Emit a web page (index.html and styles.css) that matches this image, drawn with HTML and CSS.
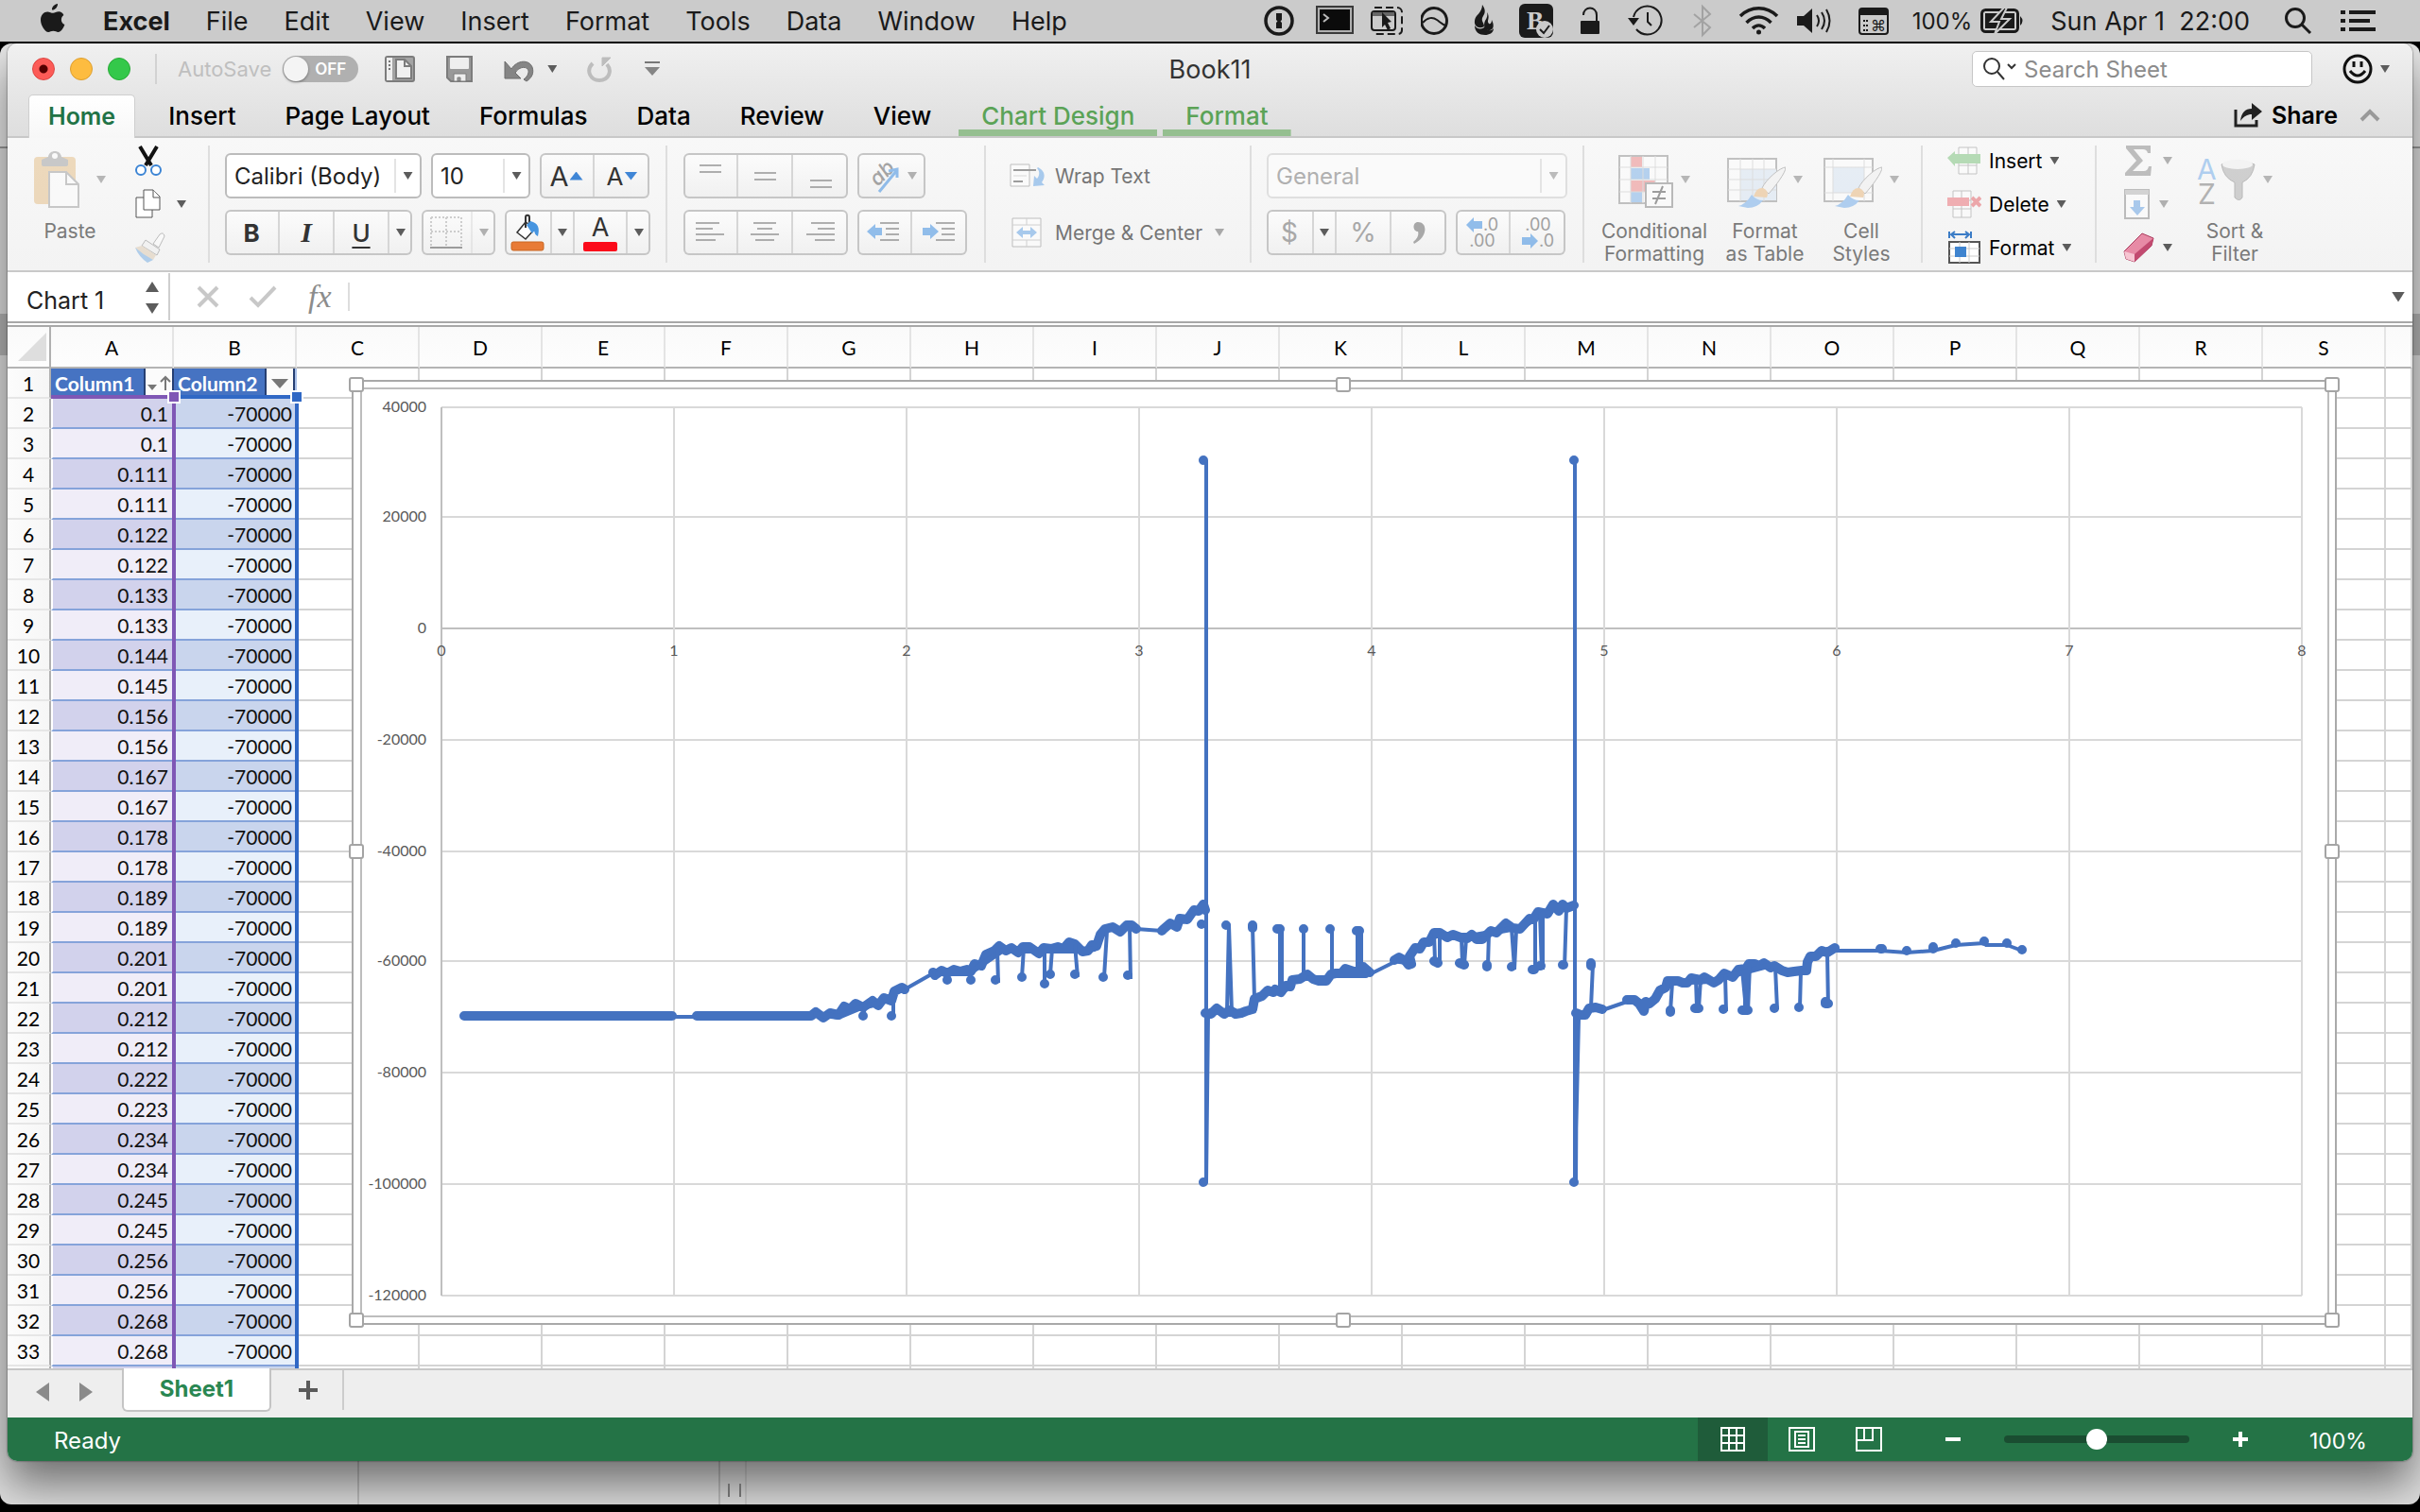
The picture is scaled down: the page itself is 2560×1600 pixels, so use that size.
FILE: index.html
```
<!DOCTYPE html>
<html lang="en">
<head>
<meta charset="utf-8">
<title>Book11</title>
<link rel="stylesheet" href="styles.css">
</head>
<body>
<header class="menubar">
  <nav class="menus" aria-label="Menu bar">
    <svg class="apple" width="28" height="34" viewBox="0 0 28 34"><path d="M19 0c.3 3-2.600 6.800-6 6.600C12.600 3.600 15.600.4 19 0zM25.400 12c-3.600 2.400-3.400 8.200 1 10-1.400 4-4 8-6.800 8-2 0-2.800-1.200-5.200-1.200S11 30 9.200 30C5.400 30 1 22.600 1 17 1 11.400 4.600 8.400 8.200 8.400c2.400 0 4 1.400 6 1.400 1.800 0 3.200-1.600 6.200-1.600 2 0 3.800 1.200 5 3.800z"/></svg>
    <a href="#" class="app">Excel</a><a href="#">File</a><a href="#">Edit</a><a href="#">View</a><a href="#">Insert</a><a href="#">Format</a><a href="#">Tools</a><a href="#">Data</a><a href="#">Window</a><a href="#">Help</a>
  </nav>
  <div class="tray">
    <svg width="37" height="36" viewBox="0 0 37 36"><circle cx="16" cy="18" r="14" fill="none" stroke="#1a1a1a" stroke-width="3.500"/><path d="M13 10h6v7l-1.500 1.500L19 20v6h-6v-6l1.500-1.500L13 17z"/></svg>
    <svg width="40" height="36" viewBox="0 0 40 36"><rect x="1" y="3" width="38" height="28" fill="#b0b0b0" stroke="#3a3a3a" stroke-width="2"/><rect x="4" y="6" width="32" height="22" fill="#0b0b0b"/><path d="M8 11l5 4-5 4" fill="none" stroke="#bbb" stroke-width="2"/></svg>
    <svg width="35" height="36" viewBox="0 0 35 36" fill="none" stroke="#1a1a1a" stroke-width="2"><rect x="1" y="8" width="25" height="20" rx="3"/><path d="M2 11h23" stroke="#666" stroke-width="4"/><path d="M4 4h24a5 5 0 0 1 5 5v19a4 4 0 0 1-4 4H4" stroke-dasharray="8 4"/><path d="M12 9l10 10-4 1 3 6-3 2-3-6-3 3z" fill="#1a1a1a" stroke="none"/></svg>
    <svg width="34" height="36" viewBox="0 0 34 36" fill="none" stroke="#1a1a1a" stroke-width="3"><circle cx="14" cy="18" r="13.500"/><path d="M2 20c5-6 11-6 15-3s6 5 9 6" stroke-width="2"/></svg>
    <svg width="30" height="36" viewBox="0 0 30 36"><path d="M13 1c5 7 2 10 0 14-1 4 2 5 2 9-5 3-11 0-10-6 0-6 8-8 8-17z"/><path d="M18 9c4 6-1 9 2 12 1 1 3 0 3-4 3 6 2 10-2 11-6 1-7-6-5-10 2-3 3-6 2-9z"/><path d="M5 23c3 5 9 4 11 1 1 4 6 6 9 2 0 5-5 7-9 7-6 0-11-3-11-10z"/></svg>
    <svg width="47" height="40" viewBox="0 0 47 40"><rect x="4" y="2" width="36" height="36" rx="6"/><text x="12" y="29" font-size="27" font-weight="700" font-family="Liberation Serif" fill="#cbcbcb">B</text><circle cx="31" cy="29" r="9" fill="#cbcbcb"/><path d="M26 29l4 4 6-8" fill="none" stroke="#1a1a1a" stroke-width="2"/></svg>
    <svg width="32" height="36" viewBox="0 0 32 36"><rect x="4" y="18" width="20" height="14" rx="1"/><path d="M7 12c0-10 14-10 14 0v7" fill="none" stroke="#1a1a1a" stroke-width="2"/></svg>
    <svg width="50" height="36" viewBox="0 0 50 36" fill="none" stroke="#1a1a1a" stroke-width="2"><path d="M10 14a15 15 0 1 1 3 13M25 9v10l4 4"/><path d="M4 15h12l-6 8z" fill="#1a1a1a" stroke="none"/></svg>
    <svg width="34" height="36" viewBox="0 0 34 36" fill="none" stroke="#a2a2a2" stroke-width="2"><path d="M6 11l17 14-8 8V3l8 8L6 25"/></svg>
    <svg width="45" height="36" viewBox="0 0 45 36" fill="none" stroke="#1a1a1a" stroke-width="4"><path d="M3 13c11-11 28-11 39 0M9.500 20c8-8 18-8 26 0M16 26c4-4 9-4 13 0" stroke-width="3.500"/><circle cx="22.500" cy="30" r="2.500" fill="#1a1a1a" stroke="none"/></svg>
    <svg width="44" height="36" viewBox="0 0 44 36"><path d="M0 13h7l9-8v26l-9-8H0z"/><path d="M21 12q4 6 0 12M26 9q6 9 0 18M31 6q7 12 0 24" fill="none" stroke="#1a1a1a" stroke-width="2"/></svg>
    <svg width="38" height="36" viewBox="0 0 38 36"><rect x="4" y="5" width="30" height="27" rx="3" fill="none" stroke="#1a1a1a" stroke-width="2"/><path d="M4 5h30v7H4z"/><path d="M8 18h5M8 23h5M8 28h5" stroke="#1a1a1a" stroke-width="2" stroke-dasharray="2 1"/><text x="16" y="29" font-size="16" font-family="DejaVu Sans">⌘</text></svg>
    <span class="pct">100%</span>
    <svg class="batt" width="46" height="28" viewBox="0 0 46 28"><rect x="1.500" y="2.500" width="38" height="23" rx="4" fill="none" stroke="#1a1a1a" stroke-width="3"/><rect x="5" y="6" width="31" height="16"/><path d="M42 9q5 5 0 10z"/><path d="M25 0L11 15h9l-5 13 16-16h-9l6-12z" stroke="#cbcbcb" stroke-width="2"/></svg>
    <span class="clock">Sun Apr 1&nbsp; 22:00</span>
    <svg class="find" width="30" height="30" viewBox="0 0 30 30" fill="none" stroke="#1a1a1a" stroke-width="3"><circle cx="12" cy="12" r="9.500"/><path d="M19 19l9 9"/></svg>
    <svg width="38" height="26" viewBox="0 0 38 26" stroke="#1a1a1a" stroke-width="4"><path d="M0 4h5M0 13h5M0 22h5M9 4h28M9 13h22M9 22h28"/></svg>
  </div>
</header>

<div class="backdrop">
<main class="window">
  <div class="chrome">
    <div class="titlebar">
      <div class="tl">
        <div class="lights"><button class="light red" aria-label="Close"></button><button class="light yellow" aria-label="Minimise"></button><button class="light green" aria-label="Zoom"></button></div>
        <label class="autosave">AutoSave <span class="toggle"><input type="checkbox">OFF</span></label>
        <div class="quick">
          <button aria-label="Open"><svg width="32" height="30" viewBox="0 0 32 30"><rect x="1" y="2" width="30" height="26" rx="2" fill="#a4a4a4" stroke="#7c7c7c" stroke-width="2"/><path d="M2 3h6v24H2z" fill="#eee"/><path d="M5 6v10" stroke="#777" stroke-width="2" stroke-dasharray="2 2"/><path d="M12 5h9l7 7v13H12z" fill="#f0f0f0" stroke="#7c7c7c" stroke-width="2"/><path d="M21 5v7h7" fill="none" stroke="#7c7c7c" stroke-width="2"/></svg></button>
          <button aria-label="Save"><svg width="30" height="30" viewBox="0 0 30 30"><path d="M2 2h26v26H6l-4-4z" fill="#999" stroke="#7c7c7c" stroke-width="2"/><rect x="5" y="3" width="20" height="12" rx="1" fill="#eee"/><path d="M9 28v-8h13v8h-6v-4h-3v4z" fill="#eee" stroke="#7c7c7c" stroke-width="1"/></svg></button>
          <button class="undo" aria-label="Undo"><svg width="32" height="28" viewBox="0 0 32 28"><path d="M1 6v18h17l-6-6c5-8 15-7 14 0-1 4-3 5-5 7l3 2c6-4 8-9 6-15C27 4 14 4 8 14z" fill="#858585" stroke="#6c6c6c"/></svg><i class="caret"></i></button>
          <button aria-label="Redo"><svg width="28" height="30" viewBox="0 0 28 30" fill="none" stroke="#bdbdbd" stroke-width="4"><path d="M6 9c-8 8-2 18 7 18 10 0 14-10 8-17"/><path d="M16 12V3h9z" fill="#bdbdbd" stroke-width="1"/></svg></button>
          <button aria-label="Customise toolbar"><svg width="18" height="18" viewBox="0 0 18 18"><path d="M1 2h16" stroke="#777" stroke-width="2"/><path d="M1 7h16l-8 9z" fill="#858585"/></svg></button>
        </div>
      </div>
      <h1>Book11</h1>
      <div class="tr">
        <label class="search"><svg width="38" height="26" viewBox="0 0 38 26" fill="none" stroke="#333" stroke-width="2"><circle cx="10" cy="10" r="8"/><path d="M16 16l7 8M27 8l4 4 4-4"/></svg><input type="text" placeholder="Search Sheet" aria-label="Search Sheet"></label>
        <button class="smile" aria-label="Feedback"><svg width="32" height="32" viewBox="0 0 32 32" fill="none" stroke="#111" stroke-width="3"><circle cx="16" cy="16" r="14"/><path d="M12 8v6M20 8v6M8 18q8 10 16 0"/></svg><i class="caret"></i></button>
      </div>
    </div>
    <nav class="tabs" aria-label="Ribbon">
      <a href="#" class="on">Home</a><a href="#">Insert</a><a href="#">Page Layout</a><a href="#">Formulas</a><a href="#">Data</a><a href="#">Review</a><a href="#">View</a><a href="#" class="ctx">Chart Design</a><a href="#" class="ctx">Format</a>
      <button class="share"><svg width="32" height="28" viewBox="0 0 32 28"><path d="M3 8v17h22v-6" fill="none" stroke="#222" stroke-width="3"/><path d="M8 20C9 11 13 7 20 7V1l11 9-11 9v-6c-5 0-8 2-12 7z" fill="#222"/></svg>Share</button>
      <button class="fold" aria-label="Collapse ribbon"><svg width="22" height="14" viewBox="0 0 22 14"><path d="M2 12l9-9 9 9" fill="none" stroke="#999" stroke-width="4"/></svg></button>
    </nav>
  </div>

  <section class="ribbon" aria-label="Home">
    <div class="group g-clip">
      <button class="big dim"><span class="pic"><svg width="58" height="60" viewBox="0 0 58 60"><rect x="0" y="6" width="44" height="50" rx="4" fill="#e0b06c"/><path d="M8 14V9l7-3c1-8 13-8 14 0l7 3v5q0 2-3 2H11q-3 0-3-2z" fill="#888"/><circle cx="22" cy="5" r="3" fill="#fff"/><path d="M16 22h18l13 13v24H16z" fill="#fff" stroke="#888" stroke-width="2"/><path d="M34 22v13h13" fill="none" stroke="#888" stroke-width="2"/></svg><i class="caret"></i></span>Paste</button>
      <div class="stack">
        <button aria-label="Cut"><svg width="30" height="32" viewBox="0 0 30 32"><path d="M6 1l12 20M24 1L12 21" stroke="#111" stroke-width="4"/><g fill="#fff" stroke="#3b84d4" stroke-width="2"><circle cx="7" cy="26" r="5"/><circle cx="23" cy="26" r="5"/></g></svg></button>
        <button aria-label="Copy"><svg width="30" height="32" viewBox="0 0 30 32" fill="#fff" stroke="#555"><path d="M2 9h17v21H2z"/><path d="M10 1h10l7 7v14H10z"/><path d="M20 1v8h7"/></svg><i class="caret"></i></button>
        <button class="dim" aria-label="Format painter"><svg width="34" height="32" viewBox="0 0 34 32"><path d="M20 12L27 2q4-3 5 2l-6 12z" fill="#fff" stroke="#777"/><path d="M12 8l15 10-3 6L8 14z" fill="#eee" stroke="#777"/><path d="M8 14l15 10-3 5Q6 24 1 16z" fill="#d9c3a5"/><path d="M1 16q9 8 19 13l-6 3Q5 26 1 16z" fill="#5fa0e0"/></svg></button>
      </div>
    </div>
    <div class="group g-font">
      <div class="row">
        <label class="combo w-font"><select aria-label="Font"><option>Calibri (Body)</option></select><span class="drop"><i class="caret"></i></span></label>
        <label class="combo w-size"><select aria-label="Font size"><option>10</option></select><span class="drop"><i class="caret"></i></span></label>
        <div class="seg"><button class="b58 big-a">A<i class="up"></i></button><button class="b58 small-a">A<i class="down"></i></button></div>
      </div>
      <div class="row">
        <div class="seg"><button class="b58"><b>B</b></button><button class="b58 it">I</button><button class="b58 un">U</button><button class="b24" aria-label="Underline style"><i class="caret"></i></button></div>
        <div class="seg"><button class="b54 dim" aria-label="Borders"><svg width="36" height="36" viewBox="0 0 36 36"><path d="M2 2h32v30M2 2v30M18 2v30M2 17h32" fill="none" stroke="#999" stroke-width="2" stroke-dasharray="2 2"/><path d="M1 34h34" stroke="#333" stroke-width="2"/></svg></button><button class="b24 dim" aria-label="Border style"><i class="caret"></i></button></div>
        <div class="seg"><button class="b50" aria-label="Fill colour"><svg width="36" height="40" viewBox="0 0 36 40"><path d="M16 9L7 20l9 7 10-11z" fill="#fff" stroke="#333" stroke-width="1.500"/><path d="M16 15V4c0-3 4-3 4 0v8" fill="none" stroke="#333" stroke-width="2"/><path d="M21 8c9 2 10 8 8 16-5-2-2-7-8-11z" fill="#4795e0"/><path d="M17 12l6 9 4-5-6-8z" fill="#4795e0"/><rect x="1" y="30" width="34" height="9" rx="2" fill="#e87b36" stroke="#c96620"/></svg></button><button class="b24 line" aria-label="Fill colours"><i class="caret"></i></button><button class="b56 fontcol" aria-label="Font colour">A<i class="bar"></i></button><button class="b24" aria-label="Font colours"><i class="caret"></i></button></div>
      </div>
    </div>
    <div class="group g-align">
      <div class="row">
        <div class="seg dimseg"><button class="b58" aria-label="Top"><svg width="30" height="30" viewBox="0 0 30 30"><path d="M4 4h23M4 11h23"/></svg></button><button class="b58" aria-label="Middle"><svg width="30" height="30" viewBox="0 0 30 30"><path d="M4 12h23M4 19h23"/></svg></button><button class="b58" aria-label="Bottom"><svg width="30" height="30" viewBox="0 0 30 30"><path d="M4 20h23M4 27h23"/></svg></button></div>
        <div class="seg dimseg"><button class="b72" aria-label="Orientation"><svg width="40" height="40" viewBox="0 0 40 40"><text x="6" y="28" font-size="22" font-weight="500" font-style="italic" fill="#777" stroke="none" transform="rotate(-45 14 22)">ab</text><path d="M14 37L33 14M24 15l9-2v9" fill="none" stroke="#5b9ee4" stroke-width="3"/></svg><i class="caret"></i></button></div>
      </div>
      <div class="row">
        <div class="seg dimseg"><button class="b58" aria-label="Left"><svg width="30" height="24" viewBox="0 0 30 24"><path d="M0 2h25M0 8h18M0 14h30M0 20h21"/></svg></button><button class="b58" aria-label="Centre"><svg width="30" height="24" viewBox="0 0 30 24"><path d="M3 2h24M7 8h16M0 14h30M5 20h20"/></svg></button><button class="b58" aria-label="Right"><svg width="30" height="24" viewBox="0 0 30 24"><path d="M5 2h25M12 8h18M0 14h30M9 20h21"/></svg></button></div>
        <div class="seg dimseg"><button class="b58" aria-label="Outdent"><svg width="36" height="24" viewBox="0 0 36 24"><path d="M14 2h20M20 8h14M20 14h14M14 20h20"/><path d="M0 11l9-8v4h7v8H9v4z" fill="#5b9ee4" stroke="none"/></svg></button><button class="b58" aria-label="Indent"><svg width="36" height="24" viewBox="0 0 36 24"><path d="M14 2h20M20 8h14M20 14h14M14 20h20"/><path d="M17 11L8 3v4H0v8h8v4z" fill="#5b9ee4" stroke="none"/></svg></button></div>
      </div>
    </div>
    <div class="group g-wrap">
      <button class="txt"><svg width="40" height="32" viewBox="0 0 40 32"><path d="M1 4h20v23H1z" fill="#fff" stroke="#888"/><path d="M4 10h24M4 22h10" stroke="#444" stroke-width="2"/><path d="M4 16h14" stroke="#bbb"/><path d="M30 7c8 4 8 11 4 16l3 3-12 1 1-11 3 3c3-4 3-8 0-11z" fill="#5b9ee4"/></svg>Wrap Text</button>
      <button class="txt"><svg width="40" height="32" viewBox="0 0 40 32"><path d="M3 1h30v30H3z" fill="#fff" stroke="#888"/><path d="M3 8h30M3 24h30M18 1v7M18 24v7" stroke="#aaa"/><path d="M7 16l7-6v4h8v-4l7 6-7 6v-4h-8v4z" fill="#5b9ee4"/></svg>Merge &amp; Center<i class="caret"></i></button>
    </div>
    <div class="group g-num">
      <div class="row"><label class="combo off w-num"><select aria-label="Number format"><option>General</option></select><span class="drop"><i class="caret"></i></span></label></div>
      <div class="row">
        <div class="seg grey"><button class="b50">$</button><button class="b24 line" aria-label="Currency"><i class="caret dark"></i></button><button class="b58">%</button><button class="b58" aria-label="Comma style"><svg width="16" height="26" viewBox="0 0 16 26"><path d="M7 2c10 0 11 15-4 23l-1-2c5-4 6-8 5-11-6 0-6-10 0-10z" fill="#a8a8a8"/></svg></button></div>
        <div class="seg dimseg dec"><button class="b58"><span><svg width="18" height="16" viewBox="0 0 18 16"><path d="M0 8l8-8v4h9v8H8v4z" fill="#5b9ee4" stroke="none"/></svg>.0</span><span>.00</span></button><button class="b58"><span>.00</span><span><svg width="18" height="16" viewBox="0 0 18 16"><path d="M17 8L9 0v4H0v8h9v4z" fill="#5b9ee4" stroke="none"/></svg>.0</span></button></div>
      </div>
    </div>
    <div class="group g-style">
      <button class="big w-cf dim"><span class="pic"><svg width="58" height="60" viewBox="0 0 58 60"><path d="M1 5h51v50H1z" fill="#fff" stroke="#777" stroke-width="2"/><path d="M13 6h12v11H13zM13 31h26v12H13z" fill="#e8696a"/><path d="M13 18h20v12H13zM13 43h12v11H13z" fill="#5b9ee4"/><path d="M1 17h51M1 30h51M1 43h51M13 5v50M26 5v50M39 5v50" stroke="#bbb" fill="none"/><rect x="29" y="34" width="28" height="25" fill="#fff" stroke="#666" stroke-width="2"/><path d="M36 43h14M36 50h14M47 37l-8 19" stroke="#222" stroke-width="2"/></svg><i class="caret"></i></span>Conditional<br>Formatting</button>
      <button class="big w-st dim"><span class="pic"><svg width="62" height="60" viewBox="0 0 62 60"><path d="M1 8h51v45H1z" fill="#fff" stroke="#777" stroke-width="2"/><path d="M14 19h38v33H14z" fill="#cfe0f2"/><path d="M1 19h51M1 30h51M1 41h51M14 8v45M27 8v45M39 8v45" stroke="#bbb"/><path d="M37 39C41 30 56 17 62 17c0 6-11 20-18 28z" fill="#eee" stroke="#777"/><path d="M28 48q3-10 10-9 7 3 4 10z" fill="#e5a65c"/><path d="M12 58q8-2 14-12 5 6 12 6-6 8-16 8z" fill="#4d97e6"/></svg><i class="caret"></i></span>Format<br>as Table</button>
      <button class="big w-st dim"><span class="pic"><svg width="62" height="60" viewBox="0 0 62 60"><path d="M1 8h51v45H1z" fill="#fff" stroke="#777" stroke-width="2"/><path d="M10 17h33v27H10z" fill="#cfe0f2"/><path d="M1 17h51M1 44h51M10 8v45M43 8v45" stroke="#bbb"/><path d="M37 39C41 30 56 17 62 17c0 6-11 20-18 28z" fill="#eee" stroke="#777"/><path d="M28 48q3-10 10-9 7 3 4 10z" fill="#e5a65c"/><path d="M12 58q8-2 14-12 5 6 12 6-6 8-16 8z" fill="#4d97e6"/></svg><i class="caret"></i></span>Cell<br>Styles</button>
    </div>
    <div class="group g-cells stack">
      <button><svg class="dim" width="36" height="32" viewBox="0 0 36 32"><path d="M12 2h19v28H12zM12 12h19M12 21h19M22 2v28" fill="#fff" stroke="#888"/><path d="M0 13l8-7v3h27v10H8v3z" fill="#66b866"/></svg>Insert<i class="caret"></i></button>
      <button><svg class="dim" width="36" height="32" viewBox="0 0 36 32"><path d="M6 2h19v28H6zM6 12h19M6 21h19M15 2v28" fill="#fff" stroke="#888"/><path d="M0 9h23v9H0z" fill="#e85860"/><path d="M26 9l9 9M35 9l-9 9" stroke="#e04850" stroke-width="4"/></svg>Delete<i class="caret"></i></button>
      <button><svg width="36" height="36" viewBox="0 0 36 36"><path d="M2 1v7M25 1v7M4 4h19M8 1L4 4l4 4M19 1l4 3-4 4" fill="none" stroke="#3b7cc6" stroke-width="2"/><rect x="2" y="12" width="32" height="22" fill="#fff" stroke="#555" stroke-width="2"/><path d="M2 19h32M2 27h32M13 12v22M23 12v22" stroke="#ccc"/><rect x="8" y="17" width="12" height="11" fill="#3f84cf"/></svg>Format<i class="caret"></i></button>
    </div>
    <div class="group g-edit">
      <div class="stack">
        <button class="dim" aria-label="AutoSum"><svg width="34" height="32" viewBox="0 0 34 32"><path d="M3 0h26v8h-3q-1-4-5-4H11l10 12L10 27h12q4 0 5-5h3l-1 10H2v-3l12-13L3 3z" fill="#777"/></svg><i class="caret"></i></button>
        <button class="dim" aria-label="Fill"><svg width="30" height="32" viewBox="0 0 30 32"><rect x="2" y="1" width="25" height="30" fill="#fff" stroke="#777" stroke-width="2"/><path d="M2 1h25v5H2z" fill="#aaa"/><path d="M11 12h7v7h5l-8 9-8-9h4z" fill="#4d93e0"/></svg><i class="caret"></i></button>
        <button aria-label="Clear"><svg width="34" height="32" viewBox="0 0 34 32"><path d="M1 20L20 1l12 5-2 8-18 17-9-3z" fill="#e78ba6" stroke="#a93a5c"/><path d="M12 23l20-17-2 8-18 17z" fill="#c24a70"/><path d="M1 20l11 3v8l-9-3z" fill="#f6c5d2"/></svg><i class="caret"></i></button>
      </div>
      <button class="big w-sort dim"><span class="pic"><svg width="62" height="60" viewBox="0 0 62 60"><text x="0" y="30" font-size="30" fill="#4d97e6">A</text><text x="1" y="56" font-size="30" fill="#555">Z</text><path d="M26 14q17-8 35 0-2 14-13 19v16q-3 5-8 0V33Q28 28 26 14z" fill="#999" stroke="#666"/><ellipse cx="43" cy="14" rx="16" ry="5" fill="#eee"/></svg><i class="caret"></i></span>Sort &amp;<br>Filter</button>
    </div>
  </section>

  <div class="formula">
    <div class="namebox"><input type="text" value="Chart 1" aria-label="Name box"><span class="steps"><i></i><i></i></span></div>
    <button aria-label="Cancel"><svg width="24" height="24" viewBox="0 0 24 24"><path d="M2 2l20 20M22 2L2 22" stroke="#c8c8c8" stroke-width="4"/></svg></button>
    <button aria-label="Enter"><svg width="30" height="24" viewBox="0 0 30 24"><path d="M2 13l8 8L28 2" fill="none" stroke="#c8c8c8" stroke-width="4"/></svg></button>
    <button class="fx">fx</button>
    <input class="fin" type="text" aria-label="Formula">
    <i class="caret wide"></i>
  </div>

  <section class="sheet">
    <table id="grid"></table>
    <div class="range ra"></div><div class="range rb"></div>
    <svg class="chart" viewBox="372 402 2100 1000" role="img" aria-label="Scatter chart">
      <rect x="372" y="402" width="2100" height="1000" fill="#fff"/>
      <rect x="373" y="403" width="2098" height="998" fill="none" stroke="#a9a9a9" stroke-width="2"/>
      <rect x="382" y="411" width="2081" height="982" fill="none" stroke="#bdbdbd" stroke-width="2"/>
      <g id="axes"></g>
      <g fill="none" stroke="#4472c0" stroke-linejoin="round" stroke-linecap="round">
        <g stroke-width="10">
          <path d="M491 1075H711M737 1075H858L863 1071 871 1077 878 1072 887 1074 893 1065 899 1068 905 1062 913 1066 923 1059 929 1064 935 1056 943 1059 946 1049 954 1045 957 1047"/>
          <path d="M987 1029L989 1032 996 1027 1002 1030 1009 1026 1016 1028 1023 1026 1027 1028 1031 1020 1038 1022 1043 1010 1052 1006 1057 1001 1064 1006 1070 1003 1077 1008 1082 1002 1089 1002 1099 1009 1104 1003 1112 1004 1119 1002 1125 1004 1131 997 1137 999 1145 1007 1151 1006 1155 1000 1160 1001 1164 989 1169 983 1177 981 1185 986 1192 979 1197 979 1202 983"/>
          <path d="M1229 985L1231 983 1238 977 1245 981 1248 972 1256 973 1263 963 1268 964 1273 957 1275 963"/>
          <path d="M1275 1072L1281 1073 1287 1067 1295 1073 1301 1069 1307 1073 1313 1072 1318 1070 1325 1068 1327 1057 1335 1054 1341 1048 1347 1050 1349 1047 1355 1050 1360 1043 1365 1044 1367 1037 1375 1036 1383 1031 1389 1036 1395 1038 1403 1038 1408 1031 1413 1030 1419 1030 1423 1025 1432 1028 1440 1028 1442 1023 1449 1029"/>
          <path d="M1475 1016L1480 1013 1487 1017 1490 1021 1493 1020 1491 1012 1497 1003 1502 1004 1506 997 1512 997 1517 987 1523 987 1531 992 1537 989 1545 992 1552 993 1557 989 1562 994 1568 994 1577 985 1583 987 1593 977 1600 982 1608 983 1618 972 1622 973 1627 965 1632 966 1637 967 1643 957 1649 964 1653 957 1657 961 1665 958"/>
          <path d="M1667 1072L1672 1074 1677 1074 1681 1067 1688 1066 1695 1068"/>
          <path d="M1721 1058H1729L1734 1062 1739 1070 1741 1060 1745 1062 1751 1057 1756 1048 1762 1045 1764 1038H1775L1780 1040H1785L1789 1035 1799 1037 1803 1034 1808 1037 1813 1040 1818 1037 1824 1030 1833 1034 1839 1026 1847 1025 1850 1020H1856L1861 1022 1866 1019 1873 1024 1877 1022 1885 1027 1891 1029 1898 1028 1906 1027 1911 1027 1912 1018 1915 1012H1921L1927 1006 1933 1008 1941 1003"/>
        </g>
        <g stroke-width="6">
          <path d="M863 1073L887 1076 911 1066 929 1062M992 1030L1025 1030 1060 1006 1110 1006 1145 1006 1158 1004M1480 1017L1490 1018M1515 990H1560L1610 981 1632 967M1640 961H1660M1764 1040L1810 1038 1840 1030 1870 1022M1287 1071H1320M1335 1052L1360 1047M1385 1035H1405M1410 1032H1445"/>
        </g>
        <g stroke-width="4" stroke-linecap="butt">
          <path d="M711 1076H737M957 1047L987 1030M1202 983L1229 985M1449 1031L1475 1018M1695 1069L1721 1060"/>
          <path d="M1941 1006H1989L2017 1008 2045 1006 2069 1000 2099 998 2101 1000H2123L2139 1006"/>
          <path d="M1276 487V1251L1278 1075M1666 487V1251L1670 1078M1667 1251L1668 1076"/>
          <path d="M913 1075L916 1062M945 1078V1050M1002 1037V1026M1027 1037V1026M1055 1005L1056 1040M1083 1003L1081 1034M1105 1003V1041M1113 1004L1111 1031M1137 999L1140 1034M1171 985L1168 1034M1195 980L1196 1036"/>
          <path d="M1298 1070L1300 979L1303 1070M1325 979L1327 1057M1379 983V1035M1409 983V1032"/>
          <path d="M1355 983V1047" stroke-width="6"/><path d="M1438 985V1026" stroke-width="8"/>
          <path d="M1517 987L1518 1017M1523 987V1020M1546 993L1547 1019M1551 993L1549 1021M1575 988L1574 1022M1599 982L1602 1024M1604 984L1602 1026M1624 972V1028M1629 966L1631 1026M1632 966V1026M1657 961L1655 1024"/>
          <path d="M1685 1021L1683 1066M1769 1040L1767 1070M1794 1036L1795 1067M1799 1036L1797 1067M1825 1032L1826 1070M1843 1026L1847 1068M1851 1022L1849 1070M1878 1024L1880 1068M1905 1028L1904 1066M1933 1008L1934 1066"/>
          <path d="M1847 1026V1068" stroke-width="6"/>
        </g>
        <path stroke-width="10" d="M1273 487h0M1665 487h0M1273 1251h0M1665 1251h0M913 1075h0M943 1075h0M1002 1037h0M1027 1037h0M1053 1037h0M1081 1034h0M1105 1041h0M1111 1031h0M1137 1031h0M1167 1034h0M1193 1032h0M1271 978h0M1297 979h0M1325 979v3M1351 983h3M1379 983h0M1407 983h0M1435 985h3M1517 1017l4 2M1544 1019l5 2M1573 1021v2M1599 1023h0M1621 1026h2M1629 1022h1M1653 1021h1M1683 1019v3M1767 1069v2M1793 1067h4M1823 1068h0M1843 1069h6M1877 1067h0M1903 1066h0M1931 1060v2h3M1989 1004h2M2017 1006h0M2045 1002v2M2069 998h0M2099 996h0M2123 998h0M2139 1005h0"/>
      </g>
      <g id="handles"></g>
    </svg>
  </section>

  <div class="sheettabs">
    <button class="prev" aria-label="Previous sheet"></button><button class="next" aria-label="Next sheet"></button>
    <a href="#" class="stab">Sheet1</a>
    <button class="add" aria-label="Add sheet"><svg width="20" height="20" viewBox="0 0 20 20"><path d="M10 0v20M0 10h20" stroke="#5a5a5a" stroke-width="4"/></svg></button>
  </div>
  <footer class="status">
    <span class="ready">Ready</span>
    <button class="vw on" aria-label="Normal view"><svg width="28" height="28" viewBox="0 0 28 28"><path d="M2 2h24v24H2zM2 10h24M2 18h24M10 2v24M18 2v24"/></svg></button>
    <button class="vw" aria-label="Page layout"><svg width="28" height="28" viewBox="0 0 28 28"><path d="M1 2h26v24H1zM7 6h14v16H7zM10 10h8M10 14h8M10 18h8"/></svg></button>
    <button class="vw" aria-label="Page break"><svg width="28" height="28" viewBox="0 0 28 28"><path d="M1 2h26v24H1zM1 15h17V2M9 2v13"/></svg></button>
    <button class="zm" aria-label="Zoom out"><svg width="16" height="16" viewBox="0 0 16 16"><path d="M0 8h16" stroke-width="4"/></svg></button>
    <input type="range" min="0" max="200" value="100" aria-label="Zoom">
    <button class="zm" aria-label="Zoom in"><svg width="16" height="16" viewBox="0 0 16 16"><path d="M0 8h16M8 0v16" stroke-width="4"/></svg></button>
    <span class="zoom">100%</span>
  </footer>
</main>
<div class="behind"><span class="pane"></span><span class="pane mid"></span><span class="grip"></span></div>
</div>
<script src="sheet.js"></script>
</body>
</html>
```
FILE: styles.css
```
* { box-sizing: border-box; }
html, body { height: 100%; }
body { margin: 0; background: #000; color: #000; font-family: Inter, "Liberation Sans", sans-serif; display: flex; flex-direction: column; overflow: hidden; }
button { font: inherit; color: inherit; background: none; border: 0; padding: 0; margin: 0; display: flex; align-items: center; }
input, select { font: inherit; color: inherit; border: 0; background: none; padding: 0; margin: 0; outline: 0; min-width: 0; }
a { color: inherit; text-decoration: none; }
svg { display: block; flex: none; }

.menubar { flex: none; height: 44px; background: #cbcbcb; color: #1a1a1a; fill: #1a1a1a; display: flex; justify-content: space-between; align-items: center; padding: 0 46px 0 42px; font-size: 27px; }
.menus { display: flex; align-items: center; gap: 38px; }
.apple { margin-right: 1px; margin-top: -2px; }
.app { font-weight: 700; }
.tray { display: flex; align-items: center; gap: 18px; }
.pct { font-size: 24px; margin-left: 4px; margin-right: -9px; }
.clock { margin-left: 10px; }
.find { margin-left: 18px; margin-right: 12px; }

.backdrop { flex: 1; min-height: 0; margin: 2px 0 8px; padding: 0 8px; border-radius: 12px; overflow: hidden; display: flex; flex-direction: column; background: linear-gradient(#e8e8e8 0 109px, #999 109px 111px, #dedede 111px 286px, #b4b4b4 286px 330px, #dedede 330px); }
.window { flex: 1; min-height: 0; display: flex; flex-direction: column; border-radius: 10px; background: #fff; box-shadow: 0 24px 46px rgba(0,0,0,.5), 0 0 2px rgba(0,0,0,.7); }
.behind { height: 46px; flex: none; display: flex; }
.pane { width: 372px; border-right: 2px solid rgba(0,0,0,.15); }
.pane.mid { width: 382px; }
.grip { width: 28px; border-right: 2px solid rgba(0,0,0,.08); padding: 24px 7px 8px 8px; }
.grip::before { content: ""; display: block; height: 14px; width: 10px; border: solid #6c6c6c; border-width: 0 2px; }

.chrome { flex: none; background: linear-gradient(#f0f0f0, #dedede); border-radius: 10px 10px 0 0; border-bottom: 2px solid #c8c8c8; }
.titlebar { height: 54px; display: flex; align-items: center; }
.titlebar h1 { margin: 0; font-size: 27px; font-weight: 400; color: #333; }
.tl, .tr { flex: 1; display: flex; align-items: center; padding-right: 24px; }
.tl { padding-right: 0; padding-left: 24px; }
.lights { display: flex; gap: 16px; padding: 0 26px 0 2px; height: 32px; align-items: center; border-right: 2px solid #d2d2d2; width: 134px; }
.light { width: 24px; height: 24px; border-radius: 50%; flex: none; }
.red { background: radial-gradient(#500 0 4px, #fc5b57 5px); border: 1px solid #dd4340; }
.yellow { background: #fdbc40; border: 1px solid #dd9f30; }
.green { background: #34c84a; border: 1px solid #27aa35; }
.autosave { display: flex; align-items: center; gap: 12px; margin-left: 22px; font-size: 22px; color: #bfbfbf; }
.toggle { width: 80px; height: 28px; border-radius: 14px; background: #b0b0b0; color: #fff; font-size: 17px; font-weight: 600; display: flex; align-items: center; gap: 7px; }
.toggle input { appearance: none; width: 26px; height: 26px; margin-left: 1px; border-radius: 50%; background: #f4f4f4; box-shadow: 0 1px 3px rgba(0,0,0,.4); }
.quick { display: flex; align-items: center; gap: 32px; margin-left: 28px; }
.quick .undo { gap: 14px; }
.caret { display: block; flex: none; width: 10px; height: 8px; background: #5c5c5c; clip-path: polygon(0 0, 100% 0, 50% 100%); }
.tr { justify-content: flex-end; }
.search { width: 360px; height: 38px; background: #fff; border: 1px solid #c6c6c6; border-radius: 5px; display: flex; align-items: center; gap: 6px; padding-left: 10px; font-size: 24px; }
.search input { flex: 1; }
.search input::placeholder { color: #8c8c8c; }
.smile { margin-left: 32px; gap: 8px; }

.tabs { display: flex; height: 44px; padding-left: 22px; font-size: 26px; font-weight: 500; }
.tabs a { padding: 0 26px; line-height: 46px; height: 44px; }
.tabs a.on { padding: 0 20px; margin-right: 9px; height: 46px; margin-bottom: -2px; background: linear-gradient(#fff, #f7f7f7); border: 1px solid #cfcfcf; border-bottom: 0; border-radius: 5px 5px 0 0; color: #217346; font-weight: 600; font-size: 25px; line-height: 44px; }
.tabs a.ctx { padding: 0 24px; margin: 0 3px; color: #5ba357; background: linear-gradient(#95bf90, #95bf90) bottom / 100% 7px no-repeat; }
.share { margin-left: auto; gap: 9px; font-weight: 600; font-size: 25px; }
.fold { margin: 0 34px 0 23px; }

.ribbon { flex: none; height: 142px; padding: 8px 0; background: linear-gradient(#f8f8f8, #f3f3f3); border-bottom: 2px solid #c9c9c9; display: flex; font-size: 21px; }
.group { border-right: 2px solid #dedede; display: flex; flex: none; }
.group:last-child { border-right: 0; }
.row { display: flex; gap: 10px; height: 48px; }
.g-font, .g-align, .g-num { flex-direction: column; gap: 12px; padding-top: 8px; padding-left: 16px; }
.g-clip { width: 214px; padding-left: 24px; }
.g-font { width: 484px; }
.g-align { width: 337px; padding-left: 17px; }
.g-wrap { width: 281px; flex-direction: column; padding: 16px 0 0 25px; gap: 28px; }
.g-num { width: 352px; }
.g-style { width: 358px; padding-left: 17px; gap: 18px; }
.g-cells { width: 184px; padding-left: 26px; }
.g-edit { padding-left: 28px; gap: 8px; }
.stack { display: flex; flex-direction: column; gap: 14px; }
.stack button { height: 32px; gap: 8px; }
.g-clip .stack { margin-left: 26px; }
.g-clip .stack button { gap: 15px; }
.g-edit .stack { width: 70px; }
.g-edit .stack button { gap: 8px; }
.dim { opacity: .45; }
.big { flex-direction: column; padding-top: 6px; line-height: 24px; color: #222; }
.big.dim { opacity: 1; color: #7a7a7a; }
.big.dim svg, .big.dim .caret { opacity: .42; }
.pic { display: flex; align-items: center; gap: 8px; margin-bottom: 13px; }
.g-clip .big { width: 84px; }
.w-cf { width: 114px; }
.w-st { width: 84px; }
.w-sort { width: 80px; }
.txt { height: 32px; color: #757575; gap: 8px; }
.txt svg, .txt .caret { opacity: .5; }
.txt .caret { margin-left: 5px; }

.combo { display: flex; align-items: center; height: 48px; border: 2px solid #bcbcbc; border-radius: 6px; background: #fff; font-size: 24px; padding-left: 8px; color: #222; }
.combo select { appearance: none; flex: 1; }
.combo.off { background: #fafafa; border-color: #dfdfdf; color: #b0b0b0; }
.combo.off .caret { opacity: .4; }
.drop { width: 27px; height: 36px; border-left: 2px solid #e4e4e4; display: flex; align-items: center; justify-content: center; }
.w-font { width: 208px; }
.w-size { width: 105px; }
.w-num { width: 318px; }
.seg { display: flex; box-shadow: inset 0 0 0 2px #c6c6c6; border-radius: 6px; background: linear-gradient(#fcfcfc, #f0f0f0); font-size: 26px; color: #333; }
.seg button { justify-content: center; border-right: 2px solid #d6d6d6; height: 44px; margin-top: 2px; }
.seg button:last-child { border-right: 0; }
.b58 { width: 58px; }
.b56 { width: 56px; }
.b54 { width: 54px; }
.b50 { width: 50px; }
.b24 { width: 24px; }
.b72 { width: 72px; gap: 4px; }
.big-a { font-size: 29px; gap: 1px; }
.small-a { gap: 1px; }
.up, .down { width: 14px; height: 9px; background: #3f86d6; clip-path: polygon(50% 0, 100% 100%, 0 100%); }
.down { clip-path: polygon(0 0, 100% 0, 50% 100%); }
.it { font-family: "Liberation Serif", serif; font-style: italic; font-weight: 700; font-size: 30px; }
.un { text-decoration: underline; text-underline-offset: 5px; font-weight: 500; }
.fontcol { flex-direction: column; font-size: 27px; line-height: 28px; gap: 1px; }
.bar { width: 36px; height: 10px; border-radius: 2px; background: #fb0a1a; }
.seg.grey { color: #a8a8a8; font-size: 28px; }
.dimseg svg { stroke: #888; stroke-width: 2; fill: none; opacity: .65; }
.dimseg .caret { opacity: .45; }
.dec button { flex-direction: column; font-size: 18px; line-height: 17px; color: #a0a0a0; }
.dec span { display: flex; align-items: center; }

.formula { flex: none; height: 58px; display: flex; align-items: center; background: #fff; border-bottom: 6px double #a8a8a8; }
.namebox { width: 172px; height: 50px; border-right: 2px solid #cfcfcf; padding: 2px 10px 0 20px; display: flex; align-items: center; font-size: 25px; margin-right: 28px; }
.namebox input { width: 120px; flex: 1; padding-top: 5px; color: #222; }
.steps { display: flex; flex-direction: column; gap: 12px; }
.steps i { width: 14px; height: 11px; background: #5c5c5c; clip-path: polygon(50% 0, 100% 100%, 0 100%); }
.steps i + i { clip-path: polygon(0 0, 100% 0, 50% 100%); }
.formula button + button { margin-left: 31px; }
.fx { font: italic 34px "Liberation Serif", serif; color: #8c8c8c; width: 46px; height: 30px; border-right: 2px solid #ddd; padding-left: 2px; }
.fin { flex: 1; }
.caret.wide { width: 14px; height: 11px; margin-right: 8px; }

.sheet { flex: 1; min-height: 0; position: relative; overflow: hidden; background: #fff; font-family: Lato, sans-serif; font-size: 21px; }
table { table-layout: fixed; border-collapse: separate; border-spacing: 0; width: 100%; }
th, td { height: 32px; padding: 1px 0 0; border: solid #d4d4d4; border-width: 0 2px 2px 0; font-weight: 400; line-height: 29px; overflow: hidden; white-space: nowrap; }
thead th { height: 44px; background: linear-gradient(#fafafa, #fdfdfd); border-color: #e4e4e4; border-bottom-color: #b4b4b4; line-height: 41px; }
tbody th { background: linear-gradient(90deg, #fcfcfc, #f6f6f6); border-right-color: #b0b0b0; border-bottom-color: #e6e6e6; }
thead th:first-child { border-right-color: #b0b0b0; padding: 0; }
.corner { display: block; width: 30px; height: 30px; margin-left: 11px; background: #dedede; clip-path: polygon(100% 0, 100% 100%, 0 100%); }
.c0 { width: 46px; }
.cn { width: 130px; }
.a, .b { text-align: right; border-bottom-color: #85a3da; border-right-color: #fff; padding-right: 3px; color: #111; }
.a { background: #f0edf8; border-left: 2px solid #fff; padding-right: 4px; }
.b { background: #e8f0fa; border-left: 2px solid #fff; }
.even .a { background: #d2d2ec; }
.even .b { background: #c9d5ed; }
.h { background: #4673c2; border: 0; color: #fff; font-weight: 700; padding: 0; }
.hd { display: flex; height: 32px; line-height: 32px; padding-left: 4px; justify-content: space-between; }
.hd button { width: 32px; border: solid #263f73; border-width: 0 2px; background: #fbfbfb; justify-content: center; gap: 4px; }
.b-h { border-right: 2px solid #a8bfe8; }
.range { position: absolute; top: 72px; bottom: 0; width: 130px; border: solid #7f57b5; border-width: 4px 4px 0 0; }
.range::after { content: ""; position: absolute; right: -7px; top: -7px; width: 10px; height: 10px; outline: 2px solid #fff; background: #7f57b5; }
.ra { left: 46px; width: 132px; z-index: 1; }
.rb { left: 178px; border-color: #3068c5; }
.rb::after { background: #3068c5; }
.chart { position: absolute; left: 364px; right: 80px; top: 56px; width: calc(100% - 444px); height: 1000px; overflow: visible; font-size: 16px; fill: #595959; }

.sheettabs { flex: none; height: 52px; border-top: 2px solid #c8c8c8; background: #eee; display: flex; }
.prev, .next { width: 14px; height: 20px; background: #8a8a8a; margin: 13px 0 0 30px; clip-path: polygon(100% 0, 100% 100%, 0 50%); }
.next { margin-left: 32px; clip-path: polygon(0 0, 100% 50%, 0 100%); }
.stab { margin: -2px 0 0 31px; width: 158px; height: 46px; background: #fff; border: solid #c4c4c4; border-width: 0 2px 2px; border-radius: 0 0 6px 6px; text-align: center; font-size: 24px; font-weight: 700; line-height: 44px; color: #2a8752; }
.add { padding: 0 26px 0 29px; height: 42px; border-right: 2px solid #ccc; }
.status { flex: none; height: 46px; background: #247346; color: #fff; display: flex; align-items: center; font-size: 24px; border-radius: 0 0 10px 10px; padding: 0 49px 0 49px; }
.ready { margin-right: auto; padding-top: 3px; }
.vw { width: 71px; height: 46px; justify-content: center; fill: none; stroke: #fff; stroke-width: 2; }
.vw.on { width: 74px; background: #1f5c3a; }
.zm { stroke: #fff; margin-left: 46px; }
.status input { appearance: none; width: 196px; height: 8px; border-radius: 4px; background: #1a4d31; margin-left: 46px; }
.status input::-webkit-slider-thumb { appearance: none; width: 22px; height: 22px; border-radius: 50%; background: #fff; }
.zoom { margin-left: 65px; width: 60px; padding-top: 3px; font-size: 23px; }
```
FILE: sheet.js
```
const colA = "0.1 0.1 0.111 0.111 0.122 0.122 0.133 0.133 0.144 0.145 0.156 0.156 0.167 0.167 0.178 0.178 0.189 0.189 0.201 0.201 0.212 0.212 0.222 0.223 0.234 0.234 0.245 0.245 0.256 0.256 0.268 0.268".split(" ");
const letters = "ABCDEFGHIJKLMNOPQRS".split("");
const blank = "<td></td>".repeat(letters.length - 2 + 1);
const sorted = '<svg width="26" height="20" viewBox="0 0 26 20"><path d="M1 11h10l-5 6z" fill="#777"/><path d="M20 17V4M15 8l5-5 5 5" fill="none" stroke="#777" stroke-width="2"/></svg>';
const plain = '<svg width="18" height="12" viewBox="0 0 18 12"><path d="M0 1h18L9 11z" fill="#777"/></svg>';

let html = '<colgroup><col class="c0">' + letters.map(() => '<col class="cn">').join("") + "<col></colgroup>";
html += '<thead><tr><th><i class="corner"></i></th>' + letters.map(l => `<th>${l}</th>`).join("") + "<th></th></tr></thead><tbody>";
html += `<tr><th>1</th><td class="h"><div class="hd">Column1<button aria-label="Filter Column1">${sorted}</button></div></td><td class="h b-h"><div class="hd">Column2<button aria-label="Filter Column2">${plain}</button></div></td>${blank}</tr>`;
colA.forEach((v, i) => {
  html += `<tr class="${i % 2 ? "odd" : "even"}"><th>${i + 2}</th><td class="a">${v}</td><td class="b">-70000</td>${blank}</tr>`;
});
html += `<tr class="even"><th></th><td class="a"></td><td class="b"></td>${blank}</tr>`;
document.getElementById("grid").innerHTML = html + "</tbody>";

const ys = [431, 547, 665, 783, 901, 1017, 1135, 1253, 1371];
let axes = "";
ys.forEach((y, i) => {
  axes += `<path d="M467 ${y}H2435" stroke="${i === 2 ? "#bfbfbf" : "#d9d9d9"}" stroke-width="2"/>`;
  axes += `<text x="451" y="${y + 5}" text-anchor="end">${40000 - 20000 * i}</text>`;
});
for (let i = 0; i < 9; i++) {
  const x = 467 + 246 * i;
  axes += `<path d="M${x} 431V1371" stroke="${i ? "#d9d9d9" : "#bfbfbf"}" stroke-width="2"/>`;
  axes += `<text x="${x}" y="694" text-anchor="middle">${i}</text>`;
}
document.getElementById("axes").innerHTML = axes;

let handles = "";
for (const x of [377, 1421, 2467]) for (const y of [407, 901, 1397]) {
  if (x === 1421 && y === 901) continue;
  handles += `<rect x="${x - 7}" y="${y - 7}" width="14" height="14" rx="2" fill="#fff" stroke="#a4a4a4" stroke-width="2"/>`;
}
document.getElementById("handles").innerHTML = handles;
```
